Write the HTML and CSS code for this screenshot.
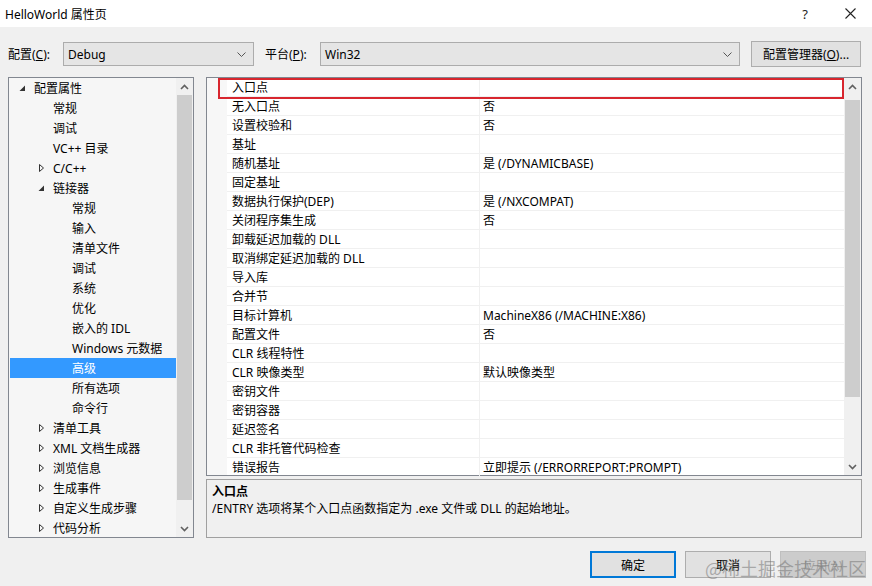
FILE: index.html
```html
<!DOCTYPE html>
<html lang="zh-CN">
<head>
    <meta charset="UTF-8">
    <title>HelloWorld 属性页</title>
    <link rel="stylesheet" href="styles.css">
</head>
<body>
    <div class="titlebar">
        <span class="title">HelloWorld 属性页</span>
        <span class="help">?</span>
        <span class="close">
            <svg width="11" height="11" viewBox="0 0 11 11"><path d="M0.5 0.5L10.5 10.5M10.5 0.5L0.5 10.5" stroke="#222" stroke-width="1.1"/></svg>
        </span>
    </div>

    <div class="toolbar">
        <span class="label">配置(<u>C</u>):</span>
        <div class="combo">
            <span>Debug</span>
            <svg width="9" height="5" viewBox="0 0 9 5"><path d="M0.5 0.5L4.5 4.5L8.5 0.5" fill="none" stroke="#555"/></svg>
        </div>
        <span class="label platform">平台(<u>P</u>):</span>
        <div class="combo wide">
            <span>Win32</span>
            <svg width="9" height="5" viewBox="0 0 9 5"><path d="M0.5 0.5L4.5 4.5L8.5 0.5" fill="none" stroke="#555"/></svg>
        </div>
        <button class="btn manager">配置管理器(<u>O</u>)...</button>
    </div>

    <div class="main">
        <div class="tree">
            <div class="tree-list">
                <div class="node lv0"><span class="twisty"><svg width="8" height="8" viewBox="0 0 8 8"><polygon points="7,1.5 7,7 1.5,7" fill="#333"/></svg></span>配置属性</div>
                <div class="node lv1"><span class="twisty"></span>常规</div>
                <div class="node lv1"><span class="twisty"></span>调试</div>
                <div class="node lv1"><span class="twisty"></span>VC++ 目录</div>
                <div class="node lv1"><span class="twisty"><svg width="8" height="8" viewBox="0 0 8 8"><polygon points="2.5,0.5 6.5,4 2.5,7.5" fill="none" stroke="#333"/></svg></span>C/C++</div>
                <div class="node lv1"><span class="twisty"><svg width="8" height="8" viewBox="0 0 8 8"><polygon points="7,1.5 7,7 1.5,7" fill="#333"/></svg></span>链接器</div>
                <div class="node lv2"><span class="twisty"></span>常规</div>
                <div class="node lv2"><span class="twisty"></span>输入</div>
                <div class="node lv2"><span class="twisty"></span>清单文件</div>
                <div class="node lv2"><span class="twisty"></span>调试</div>
                <div class="node lv2"><span class="twisty"></span>系统</div>
                <div class="node lv2"><span class="twisty"></span>优化</div>
                <div class="node lv2"><span class="twisty"></span>嵌入的 IDL</div>
                <div class="node lv2"><span class="twisty"></span>Windows 元数据</div>
                <div class="node lv2 selected"><span class="twisty"></span>高级</div>
                <div class="node lv2"><span class="twisty"></span>所有选项</div>
                <div class="node lv2"><span class="twisty"></span>命令行</div>
                <div class="node lv1"><span class="twisty"><svg width="8" height="8" viewBox="0 0 8 8"><polygon points="2.5,0.5 6.5,4 2.5,7.5" fill="none" stroke="#333"/></svg></span>清单工具</div>
                <div class="node lv1"><span class="twisty"><svg width="8" height="8" viewBox="0 0 8 8"><polygon points="2.5,0.5 6.5,4 2.5,7.5" fill="none" stroke="#333"/></svg></span>XML 文档生成器</div>
                <div class="node lv1"><span class="twisty"><svg width="8" height="8" viewBox="0 0 8 8"><polygon points="2.5,0.5 6.5,4 2.5,7.5" fill="none" stroke="#333"/></svg></span>浏览信息</div>
                <div class="node lv1"><span class="twisty"><svg width="8" height="8" viewBox="0 0 8 8"><polygon points="2.5,0.5 6.5,4 2.5,7.5" fill="none" stroke="#333"/></svg></span>生成事件</div>
                <div class="node lv1"><span class="twisty"><svg width="8" height="8" viewBox="0 0 8 8"><polygon points="2.5,0.5 6.5,4 2.5,7.5" fill="none" stroke="#333"/></svg></span>自定义生成步骤</div>
                <div class="node lv1"><span class="twisty"><svg width="8" height="8" viewBox="0 0 8 8"><polygon points="2.5,0.5 6.5,4 2.5,7.5" fill="none" stroke="#333"/></svg></span>代码分析</div>
            </div>
            <div class="scrollbar tree-scroll">
                <span class="arrow"><svg width="9" height="6" viewBox="0 0 9 6"><path d="M1 5L4.5 1.5L8 5" fill="none" stroke="#606060" stroke-width="1.6"/></svg></span>
                <div class="track"><div class="thumb"></div></div>
                <span class="arrow"><svg width="9" height="6" viewBox="0 0 9 6"><path d="M1 1L4.5 4.5L8 1" fill="none" stroke="#606060" stroke-width="1.6"/></svg></span>
            </div>
        </div>

        <div class="right">
            <div class="grid">
                <div class="grid-rows">
                    <div class="row"><span class="name">入口点</span><span class="value"></span></div>
                    <div class="row"><span class="name">无入口点</span><span class="value">否</span></div>
                    <div class="row"><span class="name">设置校验和</span><span class="value">否</span></div>
                    <div class="row"><span class="name">基址</span><span class="value"></span></div>
                    <div class="row"><span class="name">随机基址</span><span class="value">是 (/DYNAMICBASE)</span></div>
                    <div class="row"><span class="name">固定基址</span><span class="value"></span></div>
                    <div class="row"><span class="name">数据执行保护(DEP)</span><span class="value">是 (/NXCOMPAT)</span></div>
                    <div class="row"><span class="name">关闭程序集生成</span><span class="value">否</span></div>
                    <div class="row"><span class="name">卸载延迟加载的 DLL</span><span class="value"></span></div>
                    <div class="row"><span class="name">取消绑定延迟加载的 DLL</span><span class="value"></span></div>
                    <div class="row"><span class="name">导入库</span><span class="value"></span></div>
                    <div class="row"><span class="name">合并节</span><span class="value"></span></div>
                    <div class="row"><span class="name">目标计算机</span><span class="value">MachineX86 (/MACHINE:X86)</span></div>
                    <div class="row"><span class="name">配置文件</span><span class="value">否</span></div>
                    <div class="row"><span class="name">CLR 线程特性</span><span class="value"></span></div>
                    <div class="row"><span class="name">CLR 映像类型</span><span class="value">默认映像类型</span></div>
                    <div class="row"><span class="name">密钥文件</span><span class="value"></span></div>
                    <div class="row"><span class="name">密钥容器</span><span class="value"></span></div>
                    <div class="row"><span class="name">延迟签名</span><span class="value"></span></div>
                    <div class="row"><span class="name">CLR 非托管代码检查</span><span class="value"></span></div>
                    <div class="row"><span class="name">错误报告</span><span class="value">立即提示 (/ERRORREPORT:PROMPT)</span></div>
                    <div class="mark"></div>
                </div>
                <div class="scrollbar grid-scroll">
                    <span class="arrow"><svg width="9" height="6" viewBox="0 0 9 6"><path d="M1 5L4.5 1.5L8 5" fill="none" stroke="#606060" stroke-width="1.6"/></svg></span>
                    <div class="track"><div class="thumb"></div></div>
                    <span class="arrow"><svg width="9" height="6" viewBox="0 0 9 6"><path d="M1 1L4.5 4.5L8 1" fill="none" stroke="#606060" stroke-width="1.6"/></svg></span>
                </div>
            </div>
            <div class="desc">
                <div class="desc-title">入口点</div>
                <div>/ENTRY 选项将某个入口点函数指定为 .exe 文件或 DLL 的起始地址。</div>
            </div>
        </div>
    </div>

    <div class="footer">
        <button class="btn ok">确定</button>
        <button class="btn">取消</button>
        <button class="btn disabled">应用(A)</button>
        <span class="watermark">@稀土掘金技术社区</span>
    </div>
</body>
</html>
```

FILE: styles.css
```css
body {
    margin: 0;
    width: 872px;
    height: 586px;
    overflow: hidden;
    background: #f0f0f0;
    color: #000;
    font-family: "Segoe UI", "Noto Sans", "Noto Sans CJK SC", sans-serif;
    font-size: 12px;
}

u {
    text-decoration: underline;
}

.titlebar {
    height: 27px;
    background: #fff;
    display: flex;
    align-items: center;
    padding-left: 5px;
}

.title {
    flex: 1;
    font-size: 12px;
}

.help {
    font-size: 13px;
    color: #222;
    margin-right: 37px;
}

.close {
    display: flex;
    margin-right: 16px;
}

.toolbar {
    display: flex;
    align-items: center;
    height: 26px;
    margin-top: 14px;
    padding-left: 8px;
}

.label {
    width: 55px;
}

.platform {
    width: 55px;
    margin-left: 11px;
}

.combo {
    width: 191px;
    height: 24px;
    box-sizing: border-box;
    border: 1px solid #acacac;
    background: #e5e5e5;
    display: flex;
    align-items: center;
    justify-content: space-between;
    padding: 0 7px 0 4px;
}

.combo.wide {
    width: 420px;
}

.btn {
    height: 27px;
    width: 86px;
    box-sizing: border-box;
    border: 1px solid #adadad;
    background: #e1e1e1;
    font-family: inherit;
    font-size: 12px;
    color: #000;
    padding: 0;
}

.manager {
    width: 110px;
    height: 26px;
    margin-left: 11px;
}

.main {
    display: flex;
    gap: 12px;
    height: 461px;
    margin-top: 10px;
    padding-left: 8px;
}

.tree {
    width: 186px;
    box-sizing: border-box;
    border: 1px solid #828790;
    background: #f6f6f6;
    display: flex;
    overflow: hidden;
}

.tree-list {
    flex: 1;
    padding-left: 1px;
}

.node {
    height: 20px;
    display: flex;
    align-items: center;
    white-space: nowrap;
}

.node.lv0 { padding-left: 8px; }
.node.lv1 { padding-left: 27px; }
.node.lv2 { padding-left: 46px; }

.node.selected {
    background: #3399ff;
    color: #fff;
}

.twisty {
    width: 16px;
    display: flex;
    align-items: center;
}

.scrollbar {
    width: 17px;
    background: #f0f0f0;
    display: flex;
    flex-direction: column;
}

.arrow {
    height: 17px;
    display: flex;
    align-items: center;
    justify-content: center;
}

.track {
    flex: 1;
    position: relative;
}

.thumb {
    background: #cdcdcd;
    margin: 0 1px;
}

.tree-scroll .thumb {
    height: 405px;
}

.grid-scroll .track {
    padding-top: 5px;
}

.grid-scroll .thumb {
    height: 297px;
}

.right {
    width: 656px;
    display: flex;
    flex-direction: column;
    gap: 3px;
}

.grid {
    height: 399px;
    box-sizing: border-box;
    border: 1px solid #828790;
    background: #fff;
    display: flex;
}

.grid-rows {
    flex: 1;
    position: relative;
    background: linear-gradient(to right, #f7f7f7 20px, #fff 20px);
}

.row {
    height: 19px;
    display: flex;
    margin-left: 20px;
    box-sizing: border-box;
    border-bottom: 1px solid #f0f0f0;
    white-space: nowrap;
}

.name {
    width: 253px;
    padding: 2px 0 0 5px;
    line-height: 16px;
    box-sizing: border-box;
    border-right: 1px solid #f0f0f0;
}

.value {
    padding: 2px 0 0 3px;
    line-height: 16px;
}

.mark {
    position: absolute;
    left: 11px;
    top: 0;
    width: 626px;
    height: 21px;
    box-sizing: border-box;
    border: 2px solid #d8262e;
}

.desc {
    flex: 1;
    box-sizing: border-box;
    border: 1px solid #a0a0a0;
    padding: 3px 5px;
    line-height: 17px;
}

.desc-title {
    font-weight: bold;
}

.footer {
    display: flex;
    justify-content: flex-end;
    gap: 9px;
    margin-top: 13px;
    padding-right: 6px;
    position: relative;
}

.btn.ok {
    border: 2px solid #0078d7;
}

.btn.disabled {
    background: #cccccc;
    border-color: #bfbfbf;
    color: #a0a0a0;
}

.watermark {
    position: absolute;
    right: 6px;
    top: 4px;
    font-size: 18px;
    color: rgba(110, 110, 110, 0.5);
    font-family: "Noto Sans CJK SC", sans-serif;
    pointer-events: none;
}
```
